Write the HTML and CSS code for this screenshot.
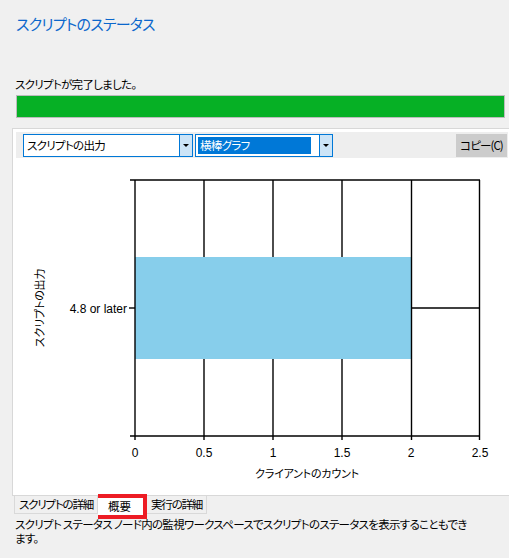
FILE: index.html
```html
<!DOCTYPE html>
<html lang="ja">
<head>
<meta charset="utf-8">
<title>スクリプトのステータス</title>
<link rel="stylesheet" href="styles.css">
</head>
<body>
<header class="header">
  <h1 class="title">スクリプトのステータス</h1>
</header>
<p class="status">スクリプトが完了しました。</p>
<div class="progress"><div class="progress-fill"></div></div>

<section class="panel">
  <div class="toolbar">
    <div class="select select-output">
      <span class="select-text">スクリプトの出力</span>
      <span class="select-arrow"><span class="caret"></span></span>
    </div>
    <div class="select select-chart">
      <span class="select-text selected">横棒グラフ</span>
      <span class="select-gap"></span>
      <span class="select-arrow"><span class="caret"></span></span>
    </div>
    <button class="copy">コピー(C)</button>
  </div>
  <svg class="chart" width="492" height="337" viewBox="0 0 492 337">
    <g class="grid">
      <line x1="188" y1="22" x2="188" y2="282"/>
      <line x1="257" y1="22" x2="257" y2="282"/>
      <line x1="326" y1="22" x2="326" y2="282"/>
    </g>
    <rect class="bar" x="119" y="99" width="276" height="102"/>
    <g class="grid">
      <line x1="119" y1="22" x2="119" y2="282"/>
      <line x1="395.5" y1="22" x2="395.5" y2="282"/>
      <line x1="463.5" y1="22" x2="463.5" y2="282"/>
      <line x1="114" y1="22" x2="464" y2="22"/>
      <line x1="114" y1="278" x2="464" y2="278"/>
      <line x1="395" y1="150" x2="464" y2="150"/>
      <line x1="113" y1="150" x2="119" y2="150"/>
    </g>
    <g class="ticks">
      <text x="119" y="299">0</text>
      <text x="188" y="299">0.5</text>
      <text x="257" y="299">1</text>
      <text x="326" y="299">1.5</text>
      <text x="395" y="299">2</text>
      <text x="464" y="299">2.5</text>
    </g>
    <text class="cat" x="111" y="155">4.8 or later</text>
    <text class="axis-title" x="291" y="320">クライアントのカウント</text>
    <text class="axis-title" transform="translate(28 150) rotate(-90)" x="0" y="0">スクリプトの出力</text>
  </svg>
</section>

<nav class="tabs">
  <span class="tab">スクリプトの詳細</span>
  <span class="tab tab-active">概要</span>
  <span class="tab">実行の詳細</span>
</nav>
<p class="desc">スクリプト ステータス ノード内の監視ワークスペースでスクリプトのステータスを表示することもできます。</p>
</body>
</html>
```

FILE: styles.css
```css
html, body {
  margin: 0;
  padding: 0;
}
body {
  background: #f0f0f0;
  font-family: "Noto Sans CJK JP", "Liberation Sans", sans-serif;
  font-size: 11.5px;
  letter-spacing: -0.7px;
  color: #000;
  width: 509px;
  height: 558px;
  overflow: hidden;
  font-feature-settings: "palt";
}
.header {
  padding: 13px 0 0 16px;
}
.title {
  margin: 0;
  font-size: 15px;
  letter-spacing: -0.8px;
  line-height: 22px;
  font-weight: normal;
  color: #0b67cc;
}
.status {
  margin: 42px 0 0 15px;
  line-height: 14px;
}
.progress {
  margin: 4px 4px 0 16px;
  height: 21px;
  border: 1px solid #bcbcbc;
  background: #e6e6e6;
}
.progress-fill {
  height: 100%;
  width: 100%;
  background: #06b025;
}
.panel {
  margin: 10px 0 0 12px;
  border-top: 1px solid #d8d8d8;
  border-left: 1px solid #d8d8d8;
  border-bottom: 1px solid #d8d8d8;
  background: #fff;
  padding: 3px 1px 0 3px;
}
.toolbar {
  display: flex;
  align-items: center;
  gap: 2px;
  height: 26px;
  padding: 0 1px 0 7px;
  background: #eeeeee;
}
.select {
  display: flex;
  height: 21px;
  border: 1px solid #0078d7;
  background: #fff;
  box-sizing: content-box;
}
.select-output {
  width: 168px;
}
.select-chart {
  width: 136px;
}
.select-text {
  flex: 1;
  line-height: 21px;
  padding-left: 3px;
  white-space: nowrap;
}
.select-text.selected {
  flex: 0 0 113px;
  margin: 2px 0 2px 2px;
  padding-left: 2px;
  line-height: 17px;
  background: #0078d7;
  color: #fff;
  box-sizing: border-box;
}
.select-gap {
  flex: 1;
}
.select-arrow {
  flex: 0 0 12px;
  border-left: 1px solid #0078d7;
  background: #cce4f7;
  display: flex;
  align-items: center;
  justify-content: center;
}
.caret {
  width: 0;
  height: 0;
  border-left: 3px solid transparent;
  border-right: 3px solid transparent;
  border-top: 3px solid #000;
}
.copy {
  margin-left: auto;
  width: 51px;
  height: 23px;
  border: none;
  background: #cccccc;
  font-family: inherit;
  font-size: 11.5px;
  letter-spacing: -0.9px;
  font-feature-settings: "palt";
  padding: 0;
  color: #000;
  white-space: nowrap;
}
.chart {
  display: block;
  letter-spacing: 0;
}
.grid line {
  stroke: #000;
  stroke-width: 1.4;
}
.bar {
  fill: #87ceeb;
}
.ticks text {
  font-family: "Liberation Sans", sans-serif;
  font-size: 12px;
  text-anchor: middle;
  fill: #000;
}
.cat {
  font-family: "Liberation Sans", sans-serif;
  font-size: 12px;
  text-anchor: end;
  fill: #000;
}
.axis-title {
  font-family: "Noto Sans CJK JP", sans-serif;
  font-size: 11px;
  letter-spacing: -0.2px;
  text-anchor: middle;
  fill: #000;
  font-feature-settings: "palt";
}
.tabs {
  display: flex;
  align-items: flex-start;
  padding-left: 14px;
  height: 21px;
}
.tab {
  height: 17px;
  line-height: 17px;
  padding: 0 4px;
  letter-spacing: -1.2px;
  border-left: 1px solid #d9d9d9;
  border-right: 1px solid #d9d9d9;
  border-bottom: 1px solid #d9d9d9;
  white-space: nowrap;
}
.tab + .tab {
  border-left: none;
}
.tab-active {
  margin-top: -2px;
  height: 17px;
  line-height: 17px;
  padding: 0 12px 0 10px;
  letter-spacing: 0;
  background: #fff;
  border: 4px solid #ed1c24;
  position: relative;
}
.desc {
  margin: 0 0 0 15px;
  width: 456px;
  line-height: 14px;
}
```
